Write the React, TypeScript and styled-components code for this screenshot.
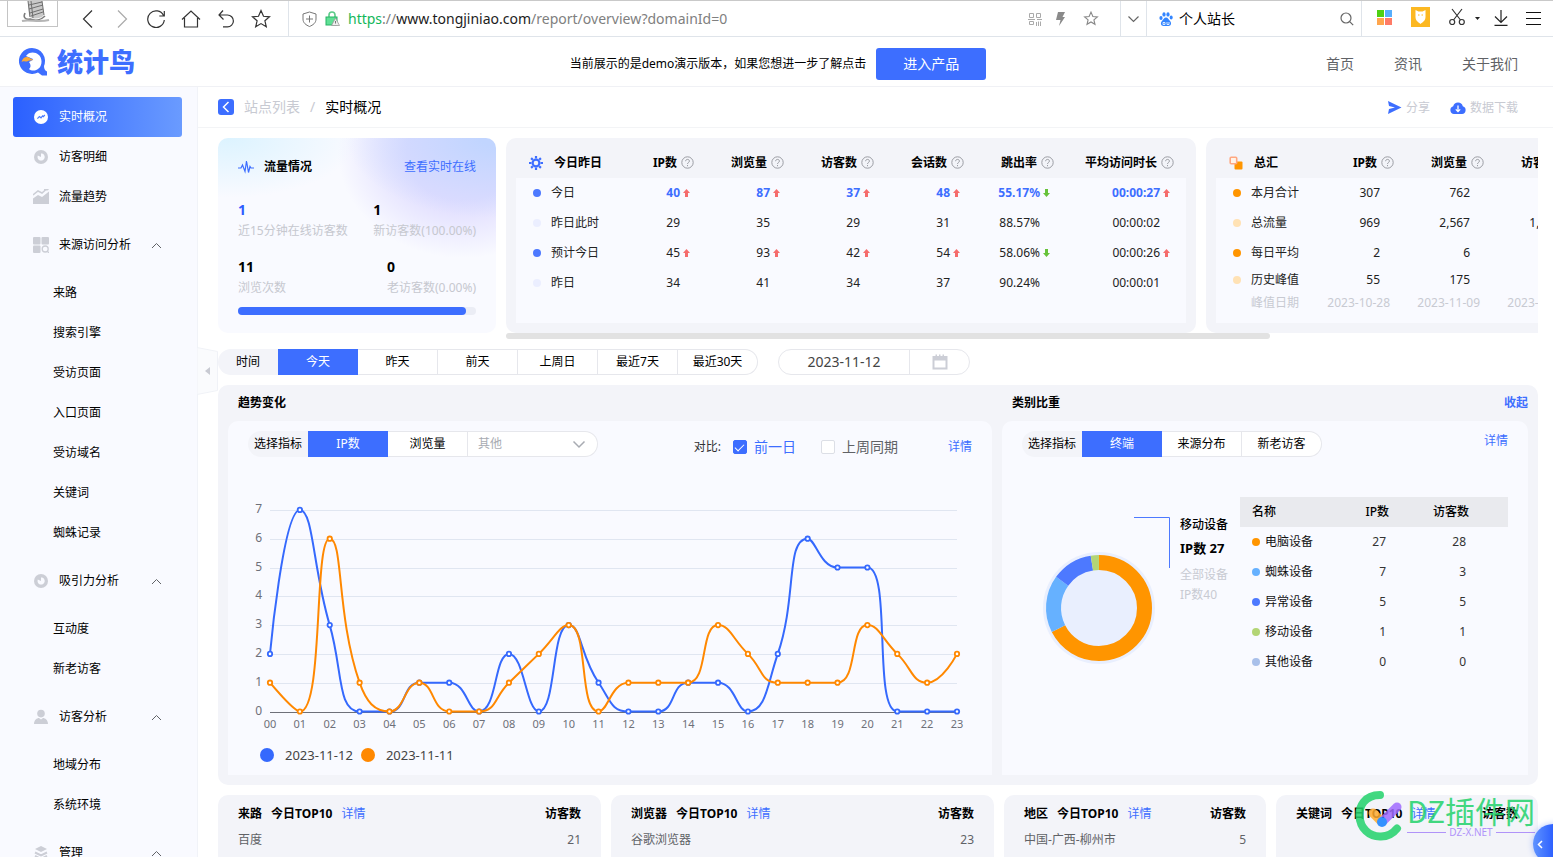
import React from 'react';
import styled, { createGlobalStyle, css } from 'styled-components';

const GlobalStyle = createGlobalStyle`
  * { box-sizing: border-box; }
  html, body, #root { height: 100%; }
  body {
    margin: 0;
    overflow: hidden;
    background: #fff;
    color: #000;
    font: 12px/20px "Noto Sans", "Noto Sans CJK SC", sans-serif;
  }
  button, input, select { font: inherit; color: inherit; margin: 0; }
  button { border: 0; padding: 0; background: none; white-space: nowrap; cursor: pointer; }
  a { text-decoration: none; color: inherit; }
  svg { display: block; flex: none; }
  h1, h2, p { margin: 0; font-size: inherit; }
`;

const blue = '#3d6eff';
const line = '#e6e7ec';
const muted = '#c8cad2';

/* ---------- browser bar ---------- */

const BrowserBar = styled.div`
  display: flex;
  flex: none;
  height: 37px;
  border-top: 1px solid #c9c9c9;
  border-bottom: 1px solid #dfe4ea;
  font-size: 14px;
`;
const BarGroup = styled.div<{ $gap?: number; $pad?: string; $grow?: boolean; $last?: boolean }>`
  display: flex;
  align-items: center;
  flex: ${(p) => (p.$grow ? '1' : 'none')};
  gap: ${(p) => p.$gap ?? 0}px;
  padding: ${(p) => p.$pad ?? '0'};
  border-right: ${(p) => (p.$last ? '0' : '1px solid #dfe4ea')};
`;
const IconButton = styled.button`
  display: flex;
  align-items: center;
  justify-content: center;
`;
const Thumb = styled.div`
  align-self: flex-start;
  width: 51px;
  height: 26px;
  border: 1px solid #c4c4c4;
  border-top: 0;
  display: flex;
  justify-content: center;
  margin-right: 5px;
`;
const Url = styled.div`
  flex: 1;
  color: #808080;
  white-space: nowrap;
  em { font-style: normal; color: #12b75a; }
  b { font-weight: 400; color: #1c1c1c; }
`;
const SearchInput = styled.input`
  width: 155px;
  padding: 0;
  border: 0;
  outline: 0;
  background: none;
`;

/* ---------- site header ---------- */

const Page = styled.div`
  display: flex;
  flex-direction: column;
  height: 100vh;
  overflow: hidden;
  position: relative;
`;
const SiteHeader = styled.header`
  flex: none;
  display: grid;
  grid-template-columns: 1fr auto 1fr;
  align-items: center;
  height: 50px;
  padding: 0 35px 0 18px;
  border-bottom: 1px solid #f0f1f5;
`;
const Logo = styled.a`
  display: flex;
  align-items: center;
  gap: 9px;
  color: ${blue};
  font-size: 26px;
  font-weight: 900;
  line-height: 32px;
`;
const Notice = styled.div`
  display: flex;
  align-items: center;
  gap: 10px;
  margin-left: 20px;
  padding-top: 4px;
`;
const EnterButton = styled.button`
  width: 110px;
  height: 32px;
  border-radius: 3px;
  background: ${blue};
  color: #fff;
  font-size: 14px;
`;
const TopNav = styled.nav`
  display: flex;
  justify-content: flex-end;
  gap: 40px;
  padding-top: 4px;
  font-size: 14px;
  color: #606266;
`;

/* ---------- sidebar ---------- */

const Body = styled.div`
  flex: 1;
  min-height: 0;
  display: flex;
`;
const Sidebar = styled.nav`
  position: relative;
  flex: none;
  width: 198px;
  padding: 10px 15px 0 13px;
  background: #f9faff;
  border-right: 1px solid #f1f3f8;
`;
const itemBase = css`
  display: flex;
  align-items: center;
  width: 100%;
  gap: 10px;
  padding-left: 20px;
`;
const SideLink = styled.a<{ $active?: boolean }>`
  ${itemBase}
  height: 40px;
  border-radius: 3px;
  ${(p) => p.$active && css`
    color: #fff;
    background: linear-gradient(90deg, #2b60ff, #6a9bff);
  `}
`;
const SubLink = styled.a`
  display: block;
  padding-left: 40px;
  line-height: 40px;
`;
const GroupButton = styled.button`
  ${itemBase}
  height: 56px;
  padding-right: 20px;
  text-align: left;
  span { flex: 1; }
`;
const SideHandle = styled.button`
  position: absolute;
  left: 197px;
  top: 260px;
`;

/* ---------- main ---------- */

const Main = styled.main`
  flex: 1;
  min-width: 0;
`;
const Crumbs = styled.div`
  display: flex;
  align-items: center;
  height: 41px;
  padding: 0 35px 0 20px;
  border-bottom: 1px solid #f3f4f6;
  font-size: 14px;
`;
const BackButton = styled(IconButton)`
  width: 16px;
  height: 16px;
  border-radius: 3px;
  background: ${blue};
`;
const CrumbLink = styled.a`
  margin-left: 10px;
  color: ${muted};
`;
const CrumbSlash = styled.span`
  margin: 0 10px;
  color: ${muted};
`;
const Spacer = styled.div`
  flex: 1;
`;
const ToolButton = styled.button`
  display: flex;
  align-items: center;
  gap: 4px;
  margin-left: 20px;
  padding-top: 2px;
  font-size: 12px;
  color: ${muted};
`;
const Content = styled.div`
  display: flex;
  flex-direction: column;
  gap: 10px;
  padding: 10px 15px 0 20px;
`;
const Row = styled.div`
  display: flex;
  gap: 10px;
`;

/* traffic card */
const TrafficCard = styled.section`
  flex: none;
  width: 278px;
  height: 195px;
  padding: 19px 20px;
  border-radius: 10px;
  background:
    radial-gradient(ellipse 130px 60px at 10px 0, #dcf3ff, rgba(220, 243, 255, 0)),
    radial-gradient(ellipse 150px 80px at 278px 0, #c1d5ff 10%, rgba(193, 213, 255, 0)),
    radial-gradient(ellipse 125px 105px at 245px 15px, #dfdcff 45%, rgba(223, 220, 255, 0)),
    #f9faff;
`;
const TrafficHead = styled.div`
  display: flex;
  align-items: center;
  gap: 10px;
  margin-bottom: 22px;
  h2 { flex: 1; }
  a { color: ${blue}; }
`;
const StatRow = styled.div`
  display: flex;
  justify-content: space-between;
  margin-bottom: 15px;
`;
const Stat = styled.div<{ $accent?: boolean }>`
  b {
    display: block;
    font-size: 14px;
    line-height: 22px;
    color: ${(p) => (p.$accent ? '#2f5cff' : '#000')};
  }
  span { color: #c6c8cf; }
`;
const Track = styled.div`
  margin-top: -6px;
  height: 8px;
  border-radius: 4px;
  background: #ebedf5;
`;
const TrackFill = styled.div`
  width: 96%;
  height: 8px;
  border-radius: 4px;
  background: ${blue};
`;

/* summary tables */
const ScrollArea = styled.div`
  flex: 1;
  min-width: 0;
  overflow: hidden;
`;
const ScrollThumb = styled.div`
  width: 74%;
  height: 6px;
  border-radius: 3px;
  background: #e2e2e2;
`;
const SummaryCard = styled.section`
  flex: none;
  width: 690px;
  height: 195px;
  padding: 9px 10px 10px;
  border-radius: 10px;
  background: #f3f4f9;
`;
const SummaryBody = styled.div`
  height: 176px;
  background: linear-gradient(#f3f4f9 31px, #f9faff 31px);
`;
const SummaryTable = styled.table`
  width: 658px;
  table-layout: fixed;
  border-collapse: collapse;
  white-space: nowrap;
  th, td { padding: 0; text-align: right; }
  th:first-child, td:first-child { text-align: left; font-weight: 400; }
`;
const HeadFirst = styled.div`
  display: flex;
  align-items: center;
  gap: 11px;
  padding-left: 13px;
  font-weight: 700;
`;
const HeadCell = styled.div`
  display: flex;
  align-items: center;
  justify-content: flex-end;
  gap: 4px;
`;
const NameCell = styled.div`
  display: flex;
  align-items: center;
  gap: 10px;
  padding-left: 17px;
`;
const Dot = styled.i<{ $c: string; $size?: number }>`
  flex: none;
  width: ${(p) => p.$size ?? 8}px;
  height: ${(p) => p.$size ?? 8}px;
  border-radius: 50%;
  background: ${(p) => p.$c};
`;
const SummaryRow = styled.tr<{ $h: number; $strong?: boolean; $faint?: boolean }>`
  height: ${(p) => p.$h}px;
  color: ${(p) => (p.$faint ? muted : '#222')};
  th { color: #000; }
  ${(p) => p.$strong && css`
    td + td { color: ${blue}; font-weight: 700; }
  `}
`;
const ValueCell = styled.div<{ $wide?: boolean }>`
  display: flex;
  align-items: center;
  justify-content: flex-end;
  padding-right: ${(p) => (p.$wide ? 4 : 0)}px;
`;
const TrendSlot = styled.span`
  display: flex;
  width: 14px;
  padding-left: 3px;
`;

/* segmented controls */
const Segments = styled.div`
  display: flex;
  height: 26px;
`;
const SegLabel = styled.span`
  width: 60px;
  line-height: 26px;
  text-align: center;
  border-radius: 13px 0 0 13px;
  background: #f3f4f9;
  white-space: nowrap;
`;
const Seg = styled.button<{ $on?: boolean }>`
  width: 80px;
  border: 1px solid ${(p) => (p.$on ? blue : line)};
  border-left-width: ${(p) => (p.$on ? 1 : 0)}px;
  background: ${(p) => (p.$on ? blue : '#fff')};
  color: ${(p) => (p.$on ? '#fff' : '#000')};
  &:last-child { border-radius: 0 13px 13px 0; }
`;
const DateBox = styled.div`
  display: flex;
  width: 192px;
  margin-left: 20px;
  border: 1px solid ${line};
  border-radius: 13px;
  overflow: hidden;
`;
const DateInput = styled.input`
  width: 131px;
  padding: 0;
  border: 0;
  border-right: 1px solid ${line};
  outline: 0;
  background: none;
  text-align: center;
  font-size: 14px;
  color: #444;
`;
const DateButton = styled(IconButton)`
  flex: 1;
`;
const SelectBox = styled.div`
  position: relative;
  width: 130px;
  svg { position: absolute; right: 12px; top: 9px; pointer-events: none; }
`;
const Select = styled.select`
  appearance: none;
  width: 100%;
  height: 26px;
  padding: 0 10px;
  border: 1px solid ${line};
  border-left: 0;
  border-radius: 0 13px 13px 0;
  outline: 0;
  background: #fff;
  color: #a8abb2;
`;

/* chart panel */
const Panel = styled.section`
  display: grid;
  grid-template-columns: 764fr 526fr;
  column-gap: 10px;
  padding: 0 10px 10px;
  border-radius: 10px;
  background: #f3f4f9;
`;
const PanelHead = styled.div`
  display: flex;
  justify-content: space-between;
  height: 36px;
  padding: 0 0 0 10px;
  line-height: 36px;
  font-weight: 700;
  a { color: ${blue}; }
`;
const PanelBody = styled.div`
  height: 354px;
  padding: 10px 20px 0;
  border-radius: 10px 10px 0 0;
  background: #f9faff;
`;
const ControlRow = styled.div`
  display: flex;
  justify-content: space-between;
`;
const Link = styled.a`
  color: ${blue};
`;
const Compare = styled.div`
  display: flex;
  align-items: center;
  height: 32px;
`;
const CheckLabel = styled.label<{ $on?: boolean }>`
  display: flex;
  align-items: center;
  gap: 7px;
  margin-right: 25px;
  font-size: 14px;
  color: ${(p) => (p.$on ? blue : '#606266')};
`;
const Check = styled.input`
  appearance: none;
  width: 14px;
  height: 14px;
  border: 1px solid #dcdfe6;
  border-radius: 2px;
  background: #fff;
  display: grid;
  place-items: center;
  &:checked { background: ${blue}; border-color: ${blue}; }
  &:checked::after {
    content: '';
    width: 8px;
    height: 4px;
    border: solid #fff;
    border-width: 0 0 1px 1px;
    transform: translateY(-1px) rotate(-45deg);
  }
`;
const CompareTitle = styled.span`
  margin-right: 12px;
  color: #303133;
`;
const DetailSlot = styled.span`
  margin-left: 25px;
`;
const ChartSvg = styled.svg`
  width: 100%;
  height: 258px;
  margin-top: 14px;
  font: 12px "Noto Sans", sans-serif;
  fill: #6e7079;
`;
const Legend = styled.div`
  display: flex;
  align-items: center;
  height: 40px;
  padding-left: 12px;
  font-size: 13px;
  color: #444;
  span { margin: 0 8px 0 11px; }
`;
const ShareBody = styled.div`
  display: flex;
  margin-top: 40px;
`;
const Caption = styled.div`
  width: 60px;
  margin-left: 8px;
  padding-top: 18px;
  white-space: nowrap;
  p { font-weight: 500; }
  b { display: block; font-size: 13px; line-height: 26px; margin-bottom: 4px; }
  span { display: block; color: ${muted}; }
`;
const ShareTable = styled.table`
  flex: 1;
  align-self: flex-start;
  border-collapse: collapse;
  table-layout: fixed;
  width: 0;
  white-space: nowrap;
  tr { height: 30px; }
  thead { background: #e9eaee; }
  th, td { padding: 0; text-align: right; }
  th { font-weight: 500; padding-right: 2px; }
  td { padding-right: 5px; color: #333; }
  th:first-child { text-align: left; padding-left: 12px; }
  td:first-child { padding-right: 0; }
`;
const DeviceCell = styled.div`
  display: flex;
  align-items: center;
  gap: 5px;
  padding-left: 12px;
  color: #111;
`;

/* bottom cards */
const TopGrid = styled.div`
  display: grid;
  grid-template-columns: 383fr 383fr 262fr 262fr;
  gap: 10px;
`;
const TopCard = styled.section`
  height: 220px;
  padding: 8px 20px;
  border-radius: 10px;
  background: #f3f4f9;
`;
const TopHead = styled.div`
  display: flex;
  gap: 9px;
  line-height: 22px;
  font-weight: 700;
  white-space: nowrap;
  a { font-weight: 400; color: ${blue}; }
`;
const TopRow = styled.div`
  display: flex;
  justify-content: space-between;
  line-height: 30px;
  color: #606266;
`;

/* overlays */
const FloatButton = styled.button`
  position: absolute;
  right: -20px;
  bottom: -7px;
  width: 40px;
  height: 40px;
  padding-left: 4px;
  border-radius: 50%;
  background: linear-gradient(90deg, #5f93ff, #2457ff 60%);
  box-shadow: 0 0 6px rgba(61, 110, 255, 0.4);
`;
const Watermark = styled.div`
  position: absolute;
  right: 18px;
  bottom: 15px;
  display: flex;
  align-items: center;
  gap: 4px;
  opacity: 0.85;
  pointer-events: none;
  color: #22d36b;
`;
const MarkText = styled.div`
  font-size: 30px;
  line-height: 32px;
  font-family: "Noto Sans CJK SC", sans-serif;
  font-weight: 400;
  white-space: nowrap;
`;
const MarkSub = styled.div`
  display: flex;
  align-items: center;
  gap: 3px;
  color: #a583fa;
  font-size: 10px;
  line-height: 12px;
  &::before, &::after { content: ''; flex: 1; height: 1px; background: #a583fa; }
`;

/* ---------- icons ---------- */

const Stroke = ({ w, h = w, d, c = '#333', sw = 1.2, vb }: { w: number; h?: number; d: string; c?: string; sw?: number; vb?: string }) => (
  <svg width={w} height={h} viewBox={vb ?? `0 0 ${w} ${h}`} fill="none" stroke={c} strokeWidth={sw}><path d={d} /></svg>
);
const starPath = 'M10 1.5l2.500 5.800 6 .5-4.600 4 1.400 6-5.300-3.200-5.300 3.200 1.400-6-4.600-4 6-.5z';

const Sketch = () => (
  <svg width="34" height="24" viewBox="0 0 34 24" fill="none">
    <path d="M12 0h14l2 14c-3 4-11 5-15 1z" fill="#c9c9c9" />
    <path d="M12 0l2 16M15 0l2 17M26 0l2 14M13 4l13-3M13 8l14-4M14 12l13-4M15 15l12-4" stroke="#6e6e6e" strokeWidth="1" />
    <path d="M9 12c-2 4 0 7 5 6 5 2 11 1 15-3" stroke="#7b7b7b" strokeWidth="1.600" />
    <path d="M6 20c8-2 16 2 27-1" stroke="#b5b5b5" strokeWidth="2" />
  </svg>
);
const Help = () => (
  <svg width="13" height="13" viewBox="0 0 13 13" fill="none" stroke="#9a9ca3">
    <circle cx="6.500" cy="6.500" r="5.700" />
    <path d="M4.600 5.200c0-2.400 3.800-2.400 3.800-.1 0 1.400-1.900 1.400-1.900 2.900M6.500 9v1.200" />
  </svg>
);
const Trend = ({ up }: { up: boolean }) => (
  <svg width="7" height="8" viewBox="0 0 7 8">
    <path d={up ? 'M3.500 0L7 4H5v4H2V4H0z' : 'M3.500 8L7 4H5V0H2v4H0z'} fill={up ? '#f56c6c' : '#67c23a'} />
  </svg>
);
const PieIcon = () => (
  <svg width="16" height="16" viewBox="0 0 16 16">
    <circle cx="8" cy="8" r="7" fill="#ccced6" />
    <path d="M8 4.400V8L4.800 6.600A3.600 3.600 0 1 0 9 4.500L8 4.400z" fill="#f9faff" />
  </svg>
);
const PulseBadge = () => (
  <svg width="16" height="16" viewBox="0 0 16 16">
    <circle cx="8" cy="8" r="7" fill="#fff" />
    <path d="M4.400 9.600l2-2 1.600 1.200 1.600-2 .8.8 1.400-1.600" fill="none" stroke="#4a7cff" strokeWidth="1.200" />
  </svg>
);
const AreaIcon = () => (
  <svg width="16" height="16" viewBox="0 0 16 16" fill="#ccced6">
    <path d="M0 15V9.500l5-3.500 4 2 7-5.500V15z" />
    <path d="M0 6l5-4 4 2 4-3.500M11 .8h4.600" stroke="#ccced6" strokeWidth="1.500" fill="none" />
    <path d="M0 8l5-3.800L9 6.200l7-5" stroke="#f9faff" strokeWidth="1" fill="none" />
  </svg>
);
const GridIcon = () => (
  <svg width="16" height="16" viewBox="0 0 16 16" fill="#ccced6">
    <rect width="7.500" height="7.500" rx="1" /><rect x="8.500" width="7.500" height="7.500" rx="1" /><rect y="8.500" width="7.500" height="7.500" rx="1" />
    <circle cx="12.200" cy="12" r="3" fill="none" stroke="#ccced6" strokeWidth="1.300" /><path d="M14 14l2 2" stroke="#ccced6" strokeWidth="1.300" />
  </svg>
);
const UserIcon = () => (
  <svg width="16" height="16" viewBox="0 0 16 16" fill="#ccced6">
    <circle cx="8" cy="4.600" r="3.800" /><path d="M1 15c0-4 3-6 5-6l2 1.500L10 9c2 0 5 2 5 6z" />
  </svg>
);
const LayersIcon = () => (
  <svg width="16" height="16" viewBox="0 0 16 16" fill="#ccced6">
    <path d="M8 1l6 3-6 3-6-3z" /><path d="M2 7.500l6 3 6-3M2 11l6 3 6-3" fill="none" stroke="#ccced6" strokeWidth="2" />
  </svg>
);
const Gear = () => (
  <svg width="14" height="14" viewBox="0 0 14 14" fill="none" stroke={blue}>
    <circle cx="7" cy="7" r="3.400" strokeWidth="2.200" />
    <g strokeWidth="2.200"><path d="M7 0v2.500M7 11.500V14M0 7h2.500M11.500 7H14M2.100 2.100l1.700 1.700M10.200 10.200l1.700 1.700M11.900 2.100l-1.700 1.700M3.800 10.200l-1.700 1.700" /></g>
  </svg>
);
const Boxes = () => (
  <svg width="14" height="14" viewBox="0 0 14 14">
    <rect x="5.500" y="5.500" width="8" height="8" rx="1" fill="#ff9500" />
    <rect x="1.200" y="1.200" width="6.500" height="6.500" rx="1" fill="#fff4ea" stroke="#ffa882" strokeWidth="1.600" />
  </svg>
);
const ChevronUp = () => <Stroke w={11} h={7} d="M1 6l4.500-4.500L10 6" c="#606266" sw={1} />;

const BrandMark = () => (
  <svg width="30" height="30" viewBox="0 0 30 30">
    <path fillRule="evenodd" fill={blue} d="M14 1a13 13 0 0 1 12 18c0 3 1 4.500 3 5.500v4h-5l-4-3A13 13 0 1 1 14 1zM8 9c4-6 15-4 15.500 5S15 25.500 11 22c2-2 2-4 0-7 2-1 4-2 4-3z" />
    <path d="M3.500 15c1-5 6-6.500 9-3.500l3 1.500c-2 .8-4 0-5 .8-2 2-5-1-7 1.200z" fill="#f9a93b" />
    <path d="M5 15c3-1 5 1 5.500 3.500S9 23 7 22 4 18 5 15z" fill={blue} />
  </svg>
);

/* ---------- data ---------- */

type Cell = [string, ('up' | 'down')?];
interface SummaryLine { name: string; dot?: string; height: number; strong?: boolean; faint?: boolean; cells: Cell[] }

const today: SummaryLine[] = [
  { name: '今日', dot: '#4d79ff', height: 30, strong: true, cells: [['40', 'up'], ['87', 'up'], ['37', 'up'], ['48', 'up'], ['55.17%', 'down'], ['00:00:27', 'up']] },
  { name: '昨日此时', dot: '#ebeeff', height: 30, cells: [['29'], ['35'], ['29'], ['31'], ['88.57%'], ['00:00:02']] },
  { name: '预计今日', dot: '#4d79ff', height: 30, cells: [['45', 'up'], ['93', 'up'], ['42', 'up'], ['54', 'up'], ['58.06%', 'down'], ['00:00:26', 'up']] },
  { name: '昨日', dot: '#ebeeff', height: 30, cells: [['34'], ['41'], ['34'], ['37'], ['90.24%'], ['00:00:01']] },
];
const totals: SummaryLine[] = [
  { name: '本月合计', dot: '#ff9500', height: 30, cells: [['307'], ['762']] },
  { name: '总流量', dot: '#ffe2b5', height: 30, cells: [['969'], ['2,567'], ['1,036']] },
  { name: '每日平均', dot: '#ff9500', height: 30, cells: [['2'], ['6']] },
  { name: '历史峰值', dot: '#ffe2b5', height: 24, cells: [['55'], ['175']] },
  { name: '峰值日期', height: 22, faint: true, cells: [['2023-10-28'], ['2023-11-09'], ['2023-11-09']] },
];
const todayCols = ['IP数', '浏览量', '访客数', '会话数', '跳出率', '平均访问时长'];
const colWidths = [88, 90, 90, 90, 90, 90, 120];

const series = [
  { name: '2023-11-12', color: '#3569fd', data: [2, 7, 3, 0, 0, 1, 1, 0, 2, 0, 3, 1, 0, 0, 1, 1, 0, 2, 6, 5, 5, 0, 0, 0] },
  { name: '2023-11-11', color: '#ff8800', data: [1, 0, 6, 1, 0, 1, 0, 0, 1, 2, 3, 0, 1, 1, 1, 3, 2, 1, 1, 1, 3, 2, 1, 2] },
];
const devices: [string, string, number, number][] = [
  ['电脑设备', '#ff9500', 27, 28],
  ['蜘蛛设备', '#66b1ff', 7, 3],
  ['异常设备', '#4d79ff', 5, 5],
  ['移动设备', '#b3d575', 1, 1],
  ['其他设备', '#a9c0ea', 0, 0],
];
const topCards = [
  { name: '来路', item: '百度', value: '21' },
  { name: '浏览器', item: '谷歌浏览器', value: '23' },
  { name: '地区', item: '中国-广西-柳州市', value: '5' },
  { name: '关键词' },
];
const groups = [
  { name: '来源访问分析', icon: <GridIcon />, items: ['来路', '搜索引擎', '受访页面', '入口页面', '受访域名', '关键词', '蜘蛛记录'] },
  { name: '吸引力分析', icon: <PieIcon />, items: ['互动度', '新老访客'] },
  { name: '访客分析', icon: <UserIcon />, items: ['地域分布', '系统环境'] },
  { name: '管理', icon: <LayersIcon />, items: [] as string[] },
];

/* ---------- chart ---------- */

const left = 22;
const right = 709;
const base = 234.5;
const unit = 28.8;
const px = (i: number) => left + ((right - left) * i) / 23;
const py = (v: number) => base - v * unit;
const between = (v: number, a: number, b: number) => Math.max(Math.min(v, Math.max(a, b)), Math.min(a, b));

/* Bezier through every point, with control points kept inside each segment so the line never overshoots. */
function smoothPath(data: number[]): string {
  const pts = data.map((v, i) => [px(i), py(v)]);
  let c0 = pts[0];
  let d = `M${pts[0].join(' ')}`;
  for (let i = 1; i < pts.length; i++) {
    const [x, y] = pts[i];
    const prev = pts[i - 1];
    let c1 = [x, y];
    let next0 = [x, y];
    if (i < pts.length - 1) {
      const next = pts[i + 1];
      const lp = Math.hypot(x - prev[0], y - prev[1]);
      const ln = Math.hypot(next[0] - x, next[1] - y);
      const r = (0.5 * ln) / (ln + lp);
      const n = [0, 1].map((k) => between(pts[i][k] + (next[k] - prev[k]) * r, pts[i][k], next[k]));
      c1 = [0, 1].map((k) => between(pts[i][k] - ((n[k] - pts[i][k]) * lp) / ln, prev[k], pts[i][k]));
      next0 = [0, 1].map((k) => pts[i][k] + ((pts[i][k] - c1[k]) * ln) / lp);
    }
    d += `C${[...c0, ...c1, x, y].map((n) => n.toFixed(1)).join(' ')}`;
    c0 = next0;
  }
  return d;
}

const TrendChart = () => (
  <ChartSvg viewBox="0 0 724 258">
    {[0, 1, 2, 3, 4, 5, 6, 7].map((v) => (
      <g key={v}>
        <path d={`M${left} ${Math.round(py(v)) + 0.5}H${right}`} stroke={v ? '#e0e6f1' : '#6e7079'} />
        <text x="14" y={py(v) + 3} textAnchor="end">{v}</text>
      </g>
    ))}
    {series[0].data.map((_, i) => (
      <text key={i} x={px(i)} y="251" textAnchor="middle" fontSize="11">{String(i).padStart(2, '0')}</text>
    ))}
    {series.map((s) => (
      <g key={s.name} stroke={s.color} strokeWidth="2">
        <path d={smoothPath(s.data)} fill="none" />
        {s.data.map((v, i) => <circle key={i} cx={px(i)} cy={py(v)} r="2.200" fill="#fff" strokeWidth="1.800" />)}
      </g>
    ))}
  </ChartSvg>
);

const Donut = () => {
  let start = 0;
  return (
    <svg width="150" height="180" viewBox="0 0 150 180" fill="none">
      <circle cx="77" cy="111" r="56" fill="#e9effe" />
      {devices.filter((d) => d[2] > 0).map(([name, color, n]) => {
        const turn = -90 + (start / 40) * 360;
        start += n;
        return (
          <circle key={name} cx="77" cy="111" r="45.500" stroke={color} strokeWidth="15" pathLength="40"
            strokeDasharray={`${n} ${40 - n}`} transform={`rotate(${turn} 77 111)`} />
        );
      })}
      <path d="M112 20.500h35.500V71" stroke="#4d79ff" />
    </svg>
  );
};

const Summary = ({ icon, title, cols, lines }: { icon: React.ReactNode; title: string; cols: string[]; lines: SummaryLine[] }) => (
  <SummaryCard>
    <SummaryBody>
      <SummaryTable>
        <colgroup>{colWidths.map((w, i) => <col key={i} width={w} />)}</colgroup>
        <thead>
          <SummaryRow $h={31}>
            <th scope="col"><HeadFirst>{icon}{title}</HeadFirst></th>
            {cols.map((c) => <th scope="col" key={c}><HeadCell>{c}<Help /></HeadCell></th>)}
          </SummaryRow>
        </thead>
        <tbody>
          {lines.map((l) => (
            <SummaryRow key={l.name} $h={l.height} $strong={l.strong} $faint={l.faint}>
              <td><NameCell><Dot $c={l.dot ?? 'transparent'} />{l.name}</NameCell></td>
              {l.cells.map(([v, t], i) => (
                <td key={i}>
                  <ValueCell $wide={l.faint}>{v}{!l.faint && <TrendSlot>{t && <Trend up={t === 'up'} />}</TrendSlot>}</ValueCell>
                </td>
              ))}
            </SummaryRow>
          ))}
        </tbody>
      </SummaryTable>
    </SummaryBody>
  </SummaryCard>
);

/* ---------- page ---------- */

const Browser = () => (
  <BrowserBar>
    <BarGroup $pad="0 17px 0 7px" $gap={15}>
      <Thumb><Sketch /></Thumb>
      <IconButton aria-label="后退"><Stroke w={20} d="M14 1.500L5.500 10l8.500 8.500" /></IconButton>
      <IconButton aria-label="前进"><Stroke w={18} h={20} d="M5 1.500L13.500 10 5 18.500" c="#aaa" /></IconButton>
      <IconButton aria-label="刷新"><Stroke w={20} d="M17.500 6.500A8.300 8.300 0 1 0 18.300 11M18.300 2v5h-5" /></IconButton>
      <IconButton aria-label="主页"><Stroke w={20} d="M1 10.500L10 2l9 8.500M3.500 9v9h13V9" /></IconButton>
      <IconButton aria-label="撤销"><Stroke w={20} d="M7 1.500L3 6l4.500 4.500M3 6h8.500a5.900 5.900 0 0 1 0 11.800H7" /></IconButton>
      <IconButton aria-label="收藏"><Stroke w={20} d={starPath} /></IconButton>
    </BarGroup>
    <BarGroup $pad="0 16px 0 13px" $gap={8} $grow>
      <Stroke w={15} h={16} d="M7.500 1L14 3v5c0 4-3 6-6.500 7.500C4 14 1 12 1 8V3zM7.500 4.500v7M4 8h7" c="#777" sw={1} />
      <svg width="15" height="15" viewBox="0 0 15 15">
        <path d="M4 6V4a3 3 0 0 1 6 0v2" fill="none" stroke="#5ecb8a" strokeWidth="1.600" />
        <rect x="1" y="6" width="11" height="8" fill="#5fe095" stroke="#27b364" />
        <path d="M10.500 7l4 7.500h-8z" fill="#eee" stroke="#999" strokeWidth=".8" /><path d="M10.500 10v2.500" stroke="#777" />
      </svg>
      <Url><em>https</em>://<b>www.tongjiniao.com</b>/report/overview?domainId=0</Url>
      <IconButton aria-label="二维码">
        <svg width="14" height="14" viewBox="0 0 14 14" fill="none" stroke="#aaa">
          <path d="M1.500 1.500h4v4h-4zM8.500 1.500h4v4h-4zM0 7.500h7M9 7.500h5M1.500 9.500h4v3h-4zM8.500 10v4M10.500 9.500V14M12.500 9.500V14" />
        </svg>
      </IconButton>
      <IconButton aria-label="极速模式"><svg width="20" height="14" viewBox="0 0 20 14"><path d="M8 0h7l-2.500 5H15L9 14l1.500-6H6z" fill="#8a8a8a" /></svg></IconButton>
      <IconButton aria-label="加入收藏"><Stroke w={26} h={15} vb="-7 0 34 20" d={starPath} c="#888" sw={1.500} /></IconButton>
    </BarGroup>
    <BarGroup $pad="0 7px"><IconButton aria-label="展开"><Stroke w={11} h={8} d="M.5 1.500l5 5 5-5" c="#666" /></IconButton></BarGroup>
    <BarGroup $pad="0 7px 0 12px" $gap={6}>
      <svg width="14" height="14" viewBox="0 0 14 14" fill="#3385ff">
        <ellipse cx="2" cy="6" rx="1.600" ry="2" /><ellipse cx="5" cy="2.400" rx="1.600" ry="2.200" /><ellipse cx="9" cy="2.400" rx="1.600" ry="2.200" /><ellipse cx="12.200" cy="5.600" rx="1.500" ry="2" />
        <path d="M7 5.600c2 0 2.500 2 4 3.400 2 2 1 5-1.500 5h-5C2 14 1 11 3 9c1.500-1.400 2-3.400 4-3.400z" />
        <path d="M4 10.500h2v2H4zM8 10v2.500h2V10" fill="none" stroke="#fff" strokeWidth=".8" />
      </svg>
      <SearchInput aria-label="搜索" defaultValue="个人站长" />
      <IconButton aria-label="搜索按钮"><svg width="14" height="14" viewBox="0 0 14 14" fill="none" stroke="#666" strokeWidth="1.200"><circle cx="6" cy="6" r="5" /><path d="M9.700 9.700l3.500 3.500" /></svg></IconButton>
    </BarGroup>
    <BarGroup $pad="0 11px 3px 15px" $last>
      <IconButton aria-label="应用">
        <svg width="15" height="15" viewBox="0 0 15 15">
          <path d="M0 0h7v7H0z" fill="#4ed012" /><path d="M8 0h7v7H8z" fill="#56aefc" /><path d="M0 8h7v7H0z" fill="#ffa64d" /><path d="M8 8h7v7H8z" fill="#ff7b66" />
        </svg>
      </IconButton>
      <IconButton aria-label="扩展">
        <svg width="57" height="20" viewBox="-19 0 57 20"><path d="M0 0h19v20H0z" fill="#fcb822" /><path d="M4.500 3l3 1.500h4l3-1.500v7c0 4-3 5-5 7-2-2-5-3-5-7z" fill="#fff" /><path d="M7 8h1.500M10.500 8H12" stroke="#fcb822" /></svg>
      </IconButton>
      <IconButton aria-label="截图">
        <svg width="16" height="18" viewBox="0 0 16 18" fill="none" stroke="#333" strokeWidth="1.200"><path d="M3 1l8.500 11M13 1L4.500 12" /><circle cx="3.200" cy="14" r="2.500" /><circle cx="12.800" cy="14" r="2.500" /></svg>
      </IconButton>
      <svg width="28" height="18" viewBox="0 0 28 18"><path d="M10 9h5l-2.500 3z" fill="#222" /></svg>
      <IconButton aria-label="下载"><Stroke w={16} h={18} d="M8 2v12M2 8.500l6 6 6-6M1.500 17.400h13" c="#222" /></IconButton>
      <IconButton aria-label="菜单"><Stroke w={33} h={18} d="M17 4.500h15M17 10.500h15M17 16.500h15" c="#111" /></IconButton>
    </BarGroup>
  </BrowserBar>
);

export default function App() {
  return (
    <Page>
      <GlobalStyle />
      <Browser />
      <SiteHeader>
        <Logo href="#"><BrandMark />统计鸟</Logo>
        <Notice>当前展示的是demo演示版本，如果您想进一步了解点击<EnterButton>进入产品</EnterButton></Notice>
        <TopNav><a href="#">首页</a><a href="#">资讯</a><a href="#">关于我们</a></TopNav>
      </SiteHeader>
      <Body>
        <Sidebar>
          <SideLink href="#" $active><PulseBadge />实时概况</SideLink>
          <SideLink href="#"><PieIcon />访客明细</SideLink>
          <SideLink href="#"><AreaIcon />流量趋势</SideLink>
          {groups.map((g) => (
            <div key={g.name}>
              <GroupButton>{g.icon}<span>{g.name}</span><ChevronUp /></GroupButton>
              {g.items.map((i) => <SubLink href="#" key={i}>{i}</SubLink>)}
            </div>
          ))}
          <SideHandle aria-label="收起菜单">
            <svg width="21" height="48" viewBox="0 0 21 48"><path d="M0 .5l20.500 4v39L0 47.500z" fill="#fafbfd" stroke="#f0f2f7" /><path d="M13 20v8l-5-4z" fill="#c8cad2" /></svg>
          </SideHandle>
        </Sidebar>
        <Main>
          <Crumbs>
            <BackButton aria-label="返回"><Stroke w={8} h={12} d="M6.500 1L1.500 6l5 5" c="#fff" sw={1.500} /></BackButton>
            <CrumbLink href="#">站点列表</CrumbLink><CrumbSlash>/</CrumbSlash><span>实时概况</span>
            <Spacer />
            <ToolButton>
              <svg width="14" height="14" viewBox="0 0 14 14"><path d="M0 0l13.500 6.500L0 13l1-5L7 6.500 1 5z" fill={blue} /></svg>分享
            </ToolButton>
            <ToolButton>
              <svg width="16" height="14" viewBox="0 0 16 14"><path d="M4 13a4 4 0 0 1-.8-7.800 5 5 0 0 1 9.600 0A4 4 0 0 1 12 13z" fill={blue} /><path d="M8 4.500v6M5.800 8.400L8 10.600l2.200-2.200" fill="none" stroke="#fff" strokeWidth="1.300" /></svg>数据下载
            </ToolButton>
          </Crumbs>
          <Content>
            <Row>
              <TrafficCard>
                <TrafficHead>
                  <Stroke w={16} h={14} d="M0 8h3l1.500-3L7 11.500 8.500 1l2 11.500L12 6.500l1 1.500h3" c={blue} />
                  <h2>流量情况</h2>
                  <a href="#">查看实时在线</a>
                </TrafficHead>
                <StatRow>
                  <Stat $accent><b>1</b><span>近15分钟在线访客数</span></Stat>
                  <Stat><b>1</b><span>新访客数(100.00%)</span></Stat>
                </StatRow>
                <StatRow>
                  <Stat><b>11</b><span>浏览次数</span></Stat>
                  <Stat><b>0</b><span>老访客数(0.00%)</span></Stat>
                </StatRow>
                <Track><TrackFill /></Track>
              </TrafficCard>
              <ScrollArea>
                <Row>
                  <Summary icon={<Gear />} title="今日昨日" cols={todayCols} lines={today} />
                  <Summary icon={<Boxes />} title="总汇" cols={todayCols.slice(0, 3)} lines={totals} />
                </Row>
                <ScrollThumb />
              </ScrollArea>
            </Row>
            <Segments>
              <SegLabel>时间</SegLabel>
              <Segments>
                <Seg $on>今天</Seg>
                {['昨天', '前天', '上周日', '最近7天', '最近30天'].map((t) => <Seg key={t}>{t}</Seg>)}
              </Segments>
              <DateBox>
                <DateInput aria-label="日期" defaultValue="2023-11-12" />
                <DateButton aria-label="选择日期">
                  <svg width="16" height="16" viewBox="0 0 16 16"><path fillRule="evenodd" d="M.5 2h3V.5H5V2h2V.5h1.500V2h2V.5H12V2h3.500v13.500H.5zM2.500 6.500v7h11v-7z" fill="#ccced6" /></svg>
                </DateButton>
              </DateBox>
            </Segments>
            <Panel>
              <PanelHead><h2>趋势变化</h2></PanelHead>
              <PanelHead><h2>类别比重</h2><a href="#">收起</a></PanelHead>
              <PanelBody>
                <ControlRow>
                  <Segments>
                    <SegLabel>选择指标</SegLabel>
                    <Seg $on>IP数</Seg>
                    <Seg>浏览量</Seg>
                    <SelectBox>
                      <Select aria-label="其他指标"><option>其他</option></Select>
                      <Stroke w={14} h={9} d="M1.500 1.500L7 7l5.500-5.500" c="#a8abb2" sw={1.500} />
                    </SelectBox>
                  </Segments>
                  <Compare>
                    <CompareTitle>对比:</CompareTitle>
                    <CheckLabel $on><Check type="checkbox" defaultChecked />前一日</CheckLabel>
                    <CheckLabel><Check type="checkbox" />上周同期</CheckLabel>
                    <DetailSlot><Link href="#">详情</Link></DetailSlot>
                  </Compare>
                </ControlRow>
                <TrendChart />
                <Legend>
                  {series.map((s) => <React.Fragment key={s.name}><Dot $c={s.color} $size={14} /><span>{s.name}</span></React.Fragment>)}
                </Legend>
              </PanelBody>
              <PanelBody>
                <ControlRow>
                  <Segments>
                    <SegLabel>选择指标</SegLabel>
                    <Seg $on>终端</Seg>
                    <Seg>来源分布</Seg>
                    <Seg>新老访客</Seg>
                  </Segments>
                  <Link href="#">详情</Link>
                </ControlRow>
                <ShareBody>
                  <Donut />
                  <Caption><p>移动设备</p><b>IP数 27</b><span>全部设备</span><span>IP数40</span></Caption>
                  <ShareTable>
                    <colgroup><col width="91" /><col width="60" /><col width="80" /><col width="37" /></colgroup>
                    <thead><tr><th scope="col">名称</th><th scope="col">IP数</th><th scope="col">访客数</th><td /></tr></thead>
                    <tbody>
                      {devices.map(([name, color, ip, uv]) => (
                        <tr key={name}><td><DeviceCell><Dot $c={color} />{name}</DeviceCell></td><td>{ip}</td><td>{uv}</td><td /></tr>
                      ))}
                    </tbody>
                  </ShareTable>
                </ShareBody>
              </PanelBody>
            </Panel>
            <TopGrid>
              {topCards.map((c) => (
                <TopCard key={c.name}>
                  <TopHead><span>{c.name}</span><span>今日TOP10</span><a href="#">详情</a><Spacer />访客数</TopHead>
                  {c.item && <TopRow><span>{c.item}</span><span>{c.value}</span></TopRow>}
                </TopCard>
              ))}
            </TopGrid>
          </Content>
        </Main>
      </Body>
      <Watermark>
        <svg width="48" height="52" viewBox="0 0 48 52" fill="none" strokeLinecap="round">
          <path d="M25 5C9 5 4 17 4.500 26 5 38 14 47 26 46.500c7 0 12-3 16-8" stroke="#22d36b" strokeWidth="8" />
          <path d="M18 23l8 8" stroke="#ffab2e" strokeWidth="9" /><path d="M42 17L28 31" stroke="#a06bff" strokeWidth="9" />
          <circle cx="27" cy="32" r="5" fill="#1380ff" />
        </svg>
        <div><MarkText>DZ插件网</MarkText><MarkSub>DZ-X.NET</MarkSub></div>
      </Watermark>
      <FloatButton aria-label="展开侧栏"><Stroke w={6} h={9} d="M5 1L1.500 4.500 5 8" c="#fff" sw={1.500} /></FloatButton>
    </Page>
  );
}
